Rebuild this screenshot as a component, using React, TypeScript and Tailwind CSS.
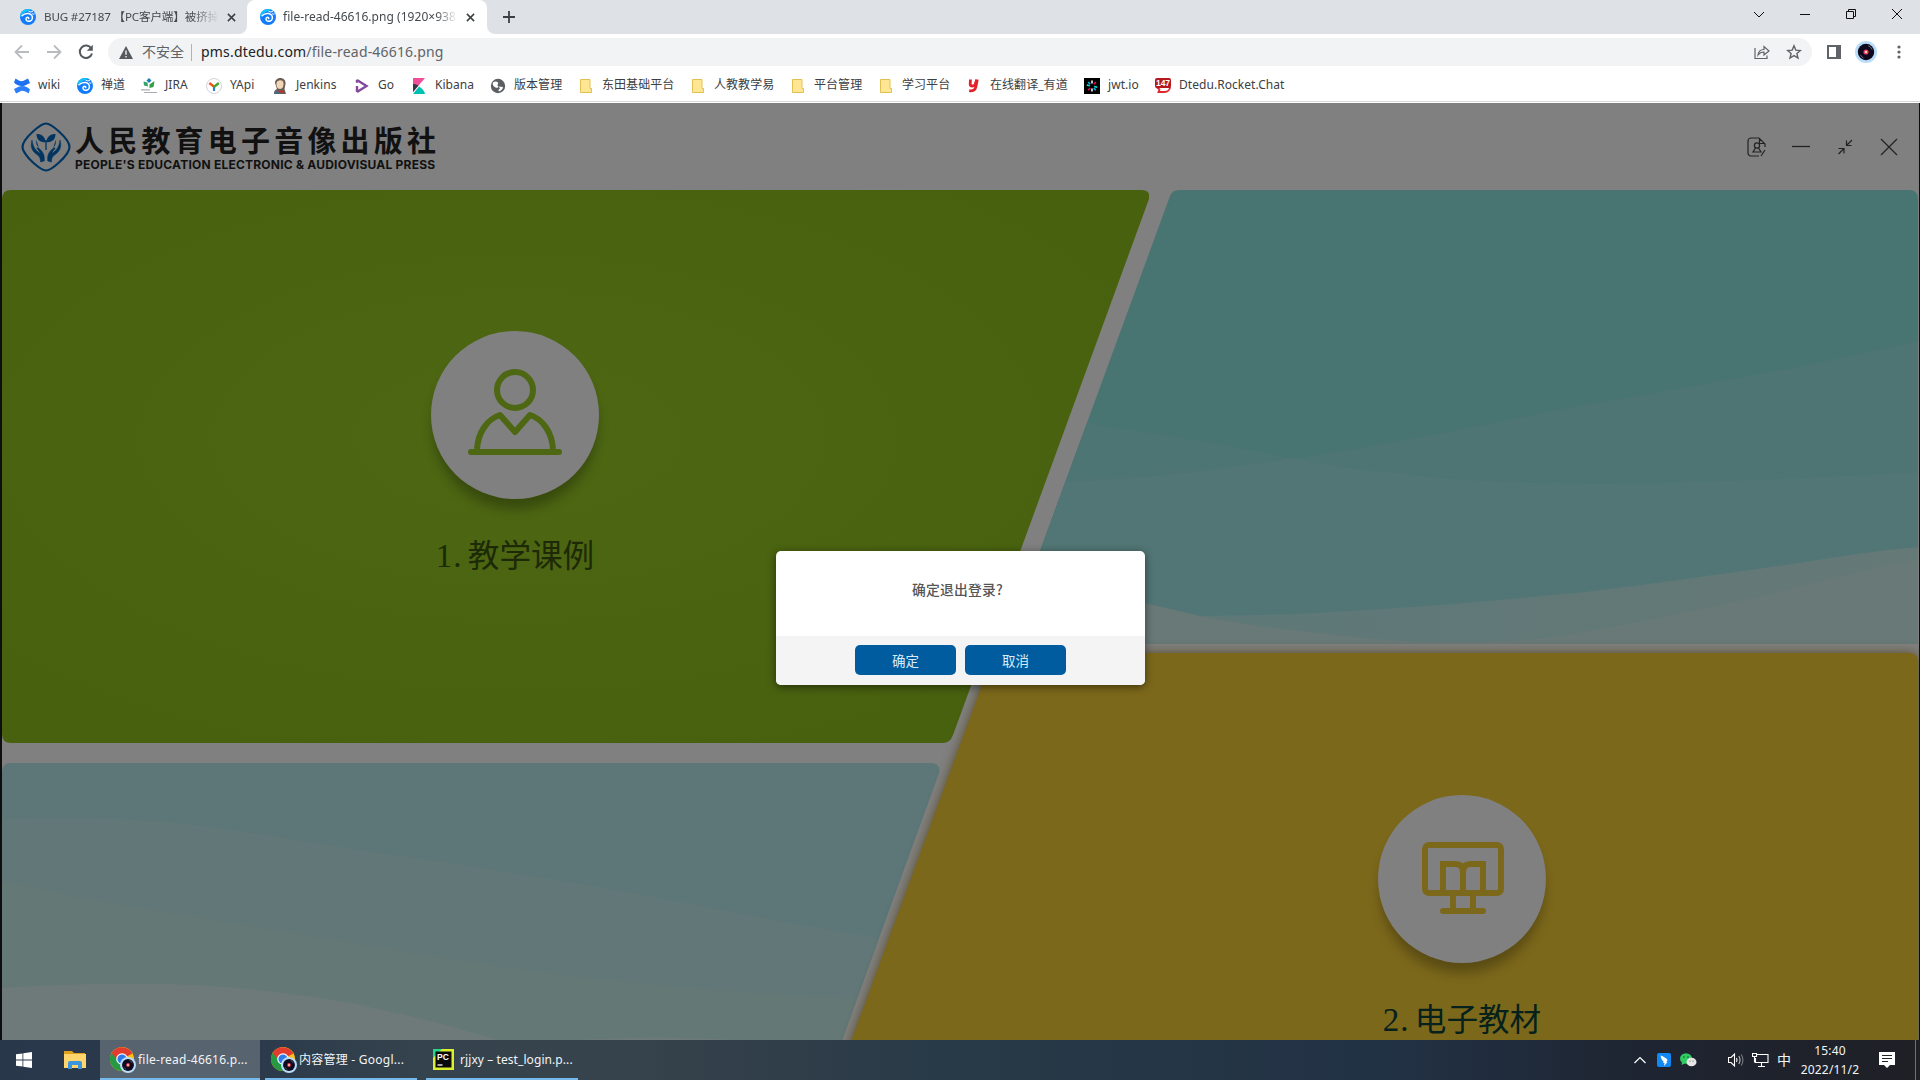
import React from "react";

const UI = "font-['Noto_Sans','Noto_Sans_CJK_SC',sans-serif]";

function SwirlIcon({ className = "h-4 w-4" }: { className?: string }) {
  return (
    <svg viewBox="0 0 16 16" className={`shrink-0 ${className}`}>
      <circle cx="8" cy="8" r="8" fill="#127dfa" />
      <path d="M0 8A8 8 0 0 1 12 1.100C8 2 4 3 0 8z" fill="#14c3f5" />
      <path d="M2 6.800C4 4.800 6.200 4.200 8.500 4.600c3 .600 4.300 2.600 3.800 5-.500 2.300-3.200 3.400-5.200 2.300-1.700-1-1.500-3.400.400-3.600.900 0 1.400.6 1.200 1.300" fill="none" stroke="#fff" strokeWidth="1.500" strokeLinecap="round" />
      <path d="M9 2.500q2 1 3.500.2M12.500 5q1 .5 1.700 0" fill="none" stroke="#fff" strokeWidth="1" strokeLinecap="round" />
    </svg>
  );
}

function CloseGlyph({ className }: { className: string }) {
  return (
    <svg viewBox="0 0 10 10" className={`shrink-0 ${className}`} fill="none" stroke="currentColor" strokeWidth="1.7">
      <path d="M1 1l8 8M9 1L1 9" />
    </svg>
  );
}

function WinBtn({ children }: { children: React.ReactNode }) {
  return (
    <div className="flex h-[28px] w-[46px] items-center justify-center">
      <svg viewBox="0 0 12 12" className="h-3 w-3" fill="none" stroke="#111" strokeWidth="1">
        {children}
      </svg>
    </div>
  );
}

function TabStrip() {
  return (
    <div className="flex h-[34px] bg-[#dee1e6] text-xs text-[#45494d]">
      <div className="flex h-[34px] w-[247px] items-center pl-5">
        <SwirlIcon />
        <span className="ml-2 w-[176px] overflow-hidden text-[11.6px] tracking-[-0.150px] whitespace-nowrap [mask-image:linear-gradient(to_right,#000_84%,transparent_99%)]">BUG #27187 【PC客户端】被挤掉</span>
        <CloseGlyph className="ml-[7px] h-[9px] w-[9px] text-[#3c4043]" />
      </div>
      <div className="relative flex h-[34px] w-[240px] items-center rounded-t-lg bg-white pl-[13px]">
        <svg viewBox="0 0 8 8" className="absolute bottom-0 -left-2 h-2 w-2"><path d="M8 0v8H0a8 8 0 0 0 8-8z" fill="#fff" /></svg>
        <svg viewBox="0 0 8 8" className="absolute -right-2 bottom-0 h-2 w-2"><path d="M0 0v8h8a8 8 0 0 1-8-8z" fill="#fff" /></svg>
        <SwirlIcon />
        <span className="ml-[7px] w-[176px] overflow-hidden text-[12px] tracking-[0.040px] whitespace-nowrap [mask-image:linear-gradient(to_right,#000_87%,transparent_99%)]">file-read-46616.png (1920×938)</span>
        <CloseGlyph className="ml-[7px] h-[9px] w-[9px] text-[#3c4043]" />
      </div>
      <svg viewBox="0 0 12 12" className="mt-[11px] ml-4 h-3 w-3" stroke="#3c4043" strokeWidth="1.8"><path d="M6 0v12M0 6h12" /></svg>
      <div className="ml-auto flex">
        <WinBtn><path d="M1 4l5 5 5-5" /></WinBtn>
        <WinBtn><path d="M1 6.500h10" /></WinBtn>
        <WinBtn><path d="M1.500 3.500h7v7h-7zM3.500 3.500v-2h7v7h-2" /></WinBtn>
        <WinBtn><path d="M1 1l10 10M11 1L1 11" /></WinBtn>
      </div>
    </div>
  );
}

function Avatar({ className }: { className: string }) {
  return (
    <svg viewBox="0 0 22 22" className={`shrink-0 ${className}`}>
      <circle cx="11" cy="11" r="11" fill="#b9dcf8" />
      <circle cx="11" cy="11" r="8.200" fill="#0c0a1c" />
      <path d="M13 4.500a7 7 0 0 1 4 4M5.500 14a7 7 0 0 0 3 3" stroke="#6d6d80" strokeWidth="1" fill="none" />
      <circle cx="11" cy="11" r="2.600" fill="#e8336b" />
      <circle cx="11" cy="11" r="1.300" fill="#ffd98a" />
    </svg>
  );
}

function Toolbar() {
  return (
    <div className="flex h-[36px] items-center">
      <svg viewBox="0 0 16 16" className="ml-[14px] h-4 w-4" fill="none" stroke="#b9bbbe" strokeWidth="1.800"><path d="M15 8H2M8 1.500L1.500 8 8 14.500" /></svg>
      <svg viewBox="0 0 16 16" className="ml-4 h-4 w-4" fill="none" stroke="#b9bbbe" strokeWidth="1.800"><path d="M1 8h13M8 1.500L14.500 8 8 14.500" /></svg>
      <svg viewBox="0 0 16 16" className="ml-4 h-4 w-4" fill="none" stroke="#55595d" strokeWidth="2"><path d="M13.300 4.500A6.200 6.200 0 1 0 14 9.500" /><path d="M14.800 0.800v6H8.800z" fill="#55595d" stroke="none" /></svg>
      <div className="ml-[14px] flex h-7 w-[1704px] items-center rounded-full bg-[#f1f3f4] pl-[11px]">
        <svg viewBox="0 0 14 13" className="h-[13px] w-[14px]"><path d="M7 0l7 13H0z" fill="#55595d" /><path d="M7 4.500v4.200M7 10v1.500" stroke="#f1f3f4" strokeWidth="1.400" /></svg>
        <span className="ml-[9px] w-[44px] pb-px text-[14px] whitespace-nowrap text-[#5f6368]">不安全</span>
        <span className="ml-[5px] h-[17px] w-px bg-[#b0b3b6]" />
        <span className="ml-[9px] pb-[2px] text-[14px] tracking-[0.180px] whitespace-nowrap text-[#5f6368]"><span className="text-[#202124]">pms.dtedu.com</span>/file-read-46616.png</span>
        <div className="mr-[10px] ml-auto flex items-center gap-[16px]">
          <svg viewBox="0 0 16 16" className="h-4 w-4" fill="none" stroke="#5f6368" strokeWidth="1.200"><path d="M1 4v10.500h12v-3M4 11c.5-4 3-5.500 6-5.500V2.500l5 4.500-5 4V8C7.500 8 5.500 9 4 11z" /></svg>
          <svg viewBox="0 0 16 16" className="h-4 w-4" fill="none" stroke="#5f6368" strokeWidth="1.400"><path d="M8 1.800l1.800 4.300 4.600.4-3.500 3 1.100 4.500-4-2.400L4 14l1.100-4.500-3.500-3 4.600-.4z" /></svg>
        </div>
      </div>
      <svg viewBox="0 0 14 14" className="ml-[15px] h-[14px] w-[14px]"><path d="M1 1h12v12H1z" fill="#fff" stroke="#5f6368" strokeWidth="2" /><path d="M9 0h5v14H9z" fill="#5f6368" /></svg>
      <Avatar className="ml-[14px] h-[22px] w-[22px]" />
      <svg viewBox="0 0 4 14" className="ml-[20px] h-[14px] w-1" fill="#5f6368"><circle cx="2" cy="2" r="1.600" /><circle cx="2" cy="7" r="1.600" /><circle cx="2" cy="12" r="1.600" /></svg>
    </div>
  );
}

const FolderGlyph = <path d="M2.500 1.500h9.500v9h1.500v4H2.500z" fill="#ffe694" stroke="#e3c150" strokeWidth="1" />;

const bookmarks: { label: string; w: string; icon: React.ReactNode }[] = [
  { label: "wiki", w: "w-[63px]", icon: <><path d="M1.500.5C4 2.500 7 3.500 9 3L14 .500 16 5 11.500 7.200C7 9.200 3 7.500 0 4.500z" fill="#1f6ff2" /><path d="M14.500 15.500C12 13.500 9 12.500 7 13L2 15.500 0 11 4.500 8.800C9 6.800 13 8.500 16 11.500z" fill="#2c7efb" /></> },
  { label: "禅道", w: "w-[64px]", icon: null },
  { label: "JIRA", w: "w-[65px]", icon: <><path d="M8 0l2.500 2.500L8 5 5.500 2.500z" fill="#1b7fb5" /><path d="M2.500 3.500l4 1 .500 4-4-1z" fill="#38a169" /><path d="M8.500 6.500L13.500 3 12.500 9l-4 1z" fill="#2f9e44" /><path d="M0 11.800h9M3 14.500h13" stroke="#a9acb0" strokeWidth="1.200" /></> },
  { label: "YApi", w: "w-[66px]", icon: <><circle cx="8" cy="8" r="7.500" fill="#fff" stroke="#cfd3d6" /><path d="M8 8.500V13" stroke="#2b7de9" strokeWidth="2.200" /><path d="M8.500 9L3.300 5" stroke="#f4511e" strokeWidth="2.400" /><path d="M8 9l4.800-4" stroke="#43a829" strokeWidth="2.400" /></> },
  { label: "Jenkins", w: "w-[82px]", icon: <><path d="M3 5C3 1.500 6 0 8.500 0S14 2 13.500 6l-1 5L14 16H2c0-3 1-4 3-5z" fill="#6b5b53" /><path d="M4.500 5C5 2 11 1 11.500 5c.300 3-1 6-3.500 6S4 8 4.500 5z" fill="#f0d6b7" /><path d="M3 13l4-1.500L9 16H2z" fill="#4b6a7c" /><path d="M6.500 12l5 1v1.800l-5-.5z" fill="#c6302b" /></> },
  { label: "Go", w: "w-[57px]", icon: <path d="M3 1.800v3M3 14V8M3 2l9.500 6L3 14" fill="none" stroke="#85499c" strokeWidth="2.400" /> },
  { label: "Kibana", w: "w-[79px]", icon: <><path d="M2 0h12L2 14z" fill="#f04e98" /><path d="M2 6c2 0 4 .600 5.500 1.500L2 14z" fill="#343741" /><path d="M8 8.500C11 10 13.500 13 14 16H2z" fill="#00bfb3" /></> },
  { label: "版本管理", w: "w-[88px]", icon: <><circle cx="8" cy="8" r="7.200" fill="#5b5f63" /><path d="M3 4.500c2-1.500 4-1 5 0S6.500 7 8 8s-1 2.500-2.500 1.500S2 7 3 4.500zM9 8.500l4 .500c0 2-2 4-4 4.500-1-1-.5-2 .5-2.500S9 9.500 9 8.500z" fill="#fff" /></> },
  { label: "东田基础平台", w: "w-[112px]", icon: FolderGlyph },
  { label: "人教教学易", w: "w-[100px]", icon: FolderGlyph },
  { label: "平台管理", w: "w-[88px]", icon: FolderGlyph },
  { label: "学习平台", w: "w-[88px]", icon: FolderGlyph },
  { label: "在线翻译_有道", w: "w-[118px]", icon: <path d="M4.500 1.500L4.200 6c0 2.600 4 2.600 5 .3l1.600-4.800M11.300 1.500L9.800 9c-.6 3.400-3.200 4.300-6.600 3.700" fill="none" stroke="#e3212b" strokeWidth="2.800" /> },
  { label: "jwt.io", w: "w-[71px]", icon: <><path d="M0 0h16v16H0z" fill="#000" /><path d="M8 2.500v3M8 10.500v3" stroke="#fff" strokeWidth="1.500" /><path d="M2.800 7l3 .700M10.200 8.500l3 .700" stroke="#00f2e6" strokeWidth="1.500" /><path d="M4.200 4l2 2.200M9.800 10l2 2.200" stroke="#00b9f1" strokeWidth="1.500" /><path d="M11.800 4l-2 2.200M6.200 10l-2 2.200" stroke="#fb015b" strokeWidth="1.500" /></> },
  { label: "Dtedu.Rocket.Chat", w: "w-[140px]", icon: <><path d="M1.500 8.500c1 2 3 2.500 3 3L3.500 14h6c3 0 5.500-2 5.500-5" fill="#fff" stroke="#e3262c" strokeWidth="1.800" /><rect x="0" y="0" width="16" height="10" rx="2" fill="#b5191f" /><text x="8" y="8.200" textAnchor="middle" fontSize="8.500" fontWeight="700" fill="#fff" fontFamily="Liberation Sans">147</text></> },
];

function BookmarkBar() {
  return (
    <div className="flex h-8 items-center border-b border-[#d5d7da] pl-[14px] text-[#3c4043]">
      {bookmarks.map((b) => (
        <div key={b.label} className={`flex h-full shrink-0 items-center gap-2 ${b.w}`}>
          {b.icon ? <svg viewBox="0 0 16 16" className="h-4 w-4 shrink-0">{b.icon}</svg> : <SwirlIcon />}
          <span className="pb-px text-[12px] leading-[18px] tracking-[0.050px] whitespace-nowrap">{b.label}</span>
        </div>
      ))}
    </div>
  );
}

function AppHeader() {
  return (
    <header className="flex h-[87px] items-center pl-[19px]">
      <svg viewBox="0 0 50 50" className="h-[50px] w-[50px]">
        <path d="M25 1.500C28 1.500 33 5 38 9.500 44 15 48.500 21 48.500 25S44 35 38 40.500 28 48.500 25 48.500 17 45 12 40.500 1.500 29 1.500 25 6 15 12 9.500 22 1.500 25 1.500z" fill="none" stroke="#003562" strokeWidth="2.200" />
        <path d="M25 20c-1.500-5.500-4-8-9.500-8 0 5.500 3.500 9 9.500 8zm0 0c1.500-5.500 4-8 9.500-8 0 5.500-3.500 9-9.500 8z" fill="#003562" />
        <path d="M25 18v10" stroke="#003562" strokeWidth="1.300" />
        <path id="hand" d="M11 18c-1.500 5-1 10 3.500 13.500C18 34 19.500 35 19.500 40l3.800-1c.5-6-.8-9-6.300-13.500l-1.200.9c1.700 1.800 2.800 3.300 3.200 5C14.500 28.500 12 25 11 18zM15.500 18.500c-.5 3 .5 5 2 6.500" fill="#003562" stroke="#003562" strokeWidth=".5" />
        <path d="M39 18c1.500 5 1 10-3.500 13.500C32 34 30.500 35 30.500 40l-3.800-1c-.5-6 .8-9 6.300-13.500l1.200.9c-1.700 1.800-2.800 3.300-3.200 5C35.500 28.500 38 25 39 18zM34.500 18.500c.5 3-.5 5-2 6.500" fill="#003562" stroke="#003562" strokeWidth=".5" />
      </svg>
      <div className="ml-[4px] flex flex-col font-bold text-[#111]">
        <span className="font-['Noto_Sans_CJK_SC',sans-serif] text-[29px] leading-[32px] tracking-[4.200px] whitespace-nowrap">人民教育电子音像出版社</span>
        <span className="mt-[4px] font-[Inter,sans-serif] text-[12px] leading-[12px] tracking-[0.220px] whitespace-nowrap">PEOPLE'S EDUCATION ELECTRONIC &amp; AUDIOVISUAL PRESS</span>
      </div>
      <div className="mr-[20px] ml-auto flex items-center gap-[24px] text-[#222]">
        <svg viewBox="0 0 20 20" className="h-5 w-5" fill="none" stroke="currentColor" strokeWidth="1.200"><path d="M12 19H4a3 3 0 0 1-3-3V4a3 3 0 0 1 3-3h8l6 6v3M12.500 1v5.500H18M18 13l-4 6" /><circle cx="10" cy="8.500" r="2.600" /><path d="M8.500 11L6 15h8l-2.500-4" /></svg>
        <svg viewBox="0 0 20 20" className="h-5 w-5" stroke="currentColor" strokeWidth="1.300"><path d="M1 9.500h18" /></svg>
        <svg viewBox="0 0 20 20" className="h-5 w-5" fill="none" stroke="currentColor" strokeWidth="1.200"><path d="M17 3l-5.500 5.500M11.500 3.500v5h5M3.500 17L9 11.500M3.500 11.500H9v5" /></svg>
        <svg viewBox="0 0 20 20" className="h-5 w-5" stroke="currentColor" strokeWidth="1.200"><path d="M2 2l16 16M18 2L2 18" /></svg>
      </div>
    </header>
  );
}

function Badge({ children }: { children: React.ReactNode }) {
  return (
    <div className="flex h-[168px] w-[168px] items-center justify-center rounded-full bg-[#808080] shadow-[0_12px_12px_-2px_rgba(0,0,0,0.28)]">
      <svg viewBox="0 0 168 168" className="h-[168px] w-[168px]">{children}</svg>
    </div>
  );
}

function CardTitle({ num, label, className }: { num: string; label: string; className: string }) {
  return (
    <div className={`flex items-baseline whitespace-nowrap ${className}`}>
      <span className="w-[32px] font-['Liberation_Serif',serif] text-[33px] leading-[40px] tracking-[1px]">{num}</span>
      <span className="font-['Noto_Sans_CJK_SC',sans-serif] text-[31.600px] leading-[40px] font-normal">{label}</span>
    </div>
  );
}

function CoursePanel() {
  return (
    <section className="relative h-[553px] w-[1147px]">
      <svg viewBox="0 0 1147 553" className="absolute inset-0 h-full w-full">
        <defs><radialGradient id="lime" cx="45%" cy="45%" r="60%"><stop offset="0" stopColor="#4d6713" /><stop offset="1" stopColor="#48610f" /></radialGradient></defs>
        <path d="M9 0H1139Q1149 0 1147 9L951 545Q948 553 941 553H9Q0 553 0 544V9Q0 0 9 0z" fill="url(#lime)" />
      </svg>
      <div className="relative ml-[429px] flex w-[168px] flex-col items-center pt-[141px]">
        <Badge>
          <g fill="none" stroke="#4d6713" strokeWidth="6">
            <circle cx="84" cy="59" r="18" />
            <path d="M46 118C47 102 56 88 69 84L84 101 99 84C112 88 121 102 122 118" strokeLinejoin="round" />
            <path d="M40 121h88" strokeLinecap="round" />
          </g>
        </Badge>
        <CardTitle num="1." label="教学课例" className="mt-[34px] text-[#1d2907]" />
      </div>
    </section>
  );
}

function LeftWaves() {
  return (
    <section className="relative mt-5 h-[277px] w-[939px] overflow-hidden">
      <svg viewBox="2 763 939 277" className="absolute inset-0 h-full w-full">
        <defs><clipPath id="lowLeft"><path d="M11 763H931Q941 763 939 773L842 1040H2V772Q2 763 11 763z" /></clipPath></defs>
        <g clipPath="url(#lowLeft)">
          <path d="M0 763h945v277H0z" fill="#5d7677" />
          <path d="M0 819C50 817 110 817 153 821 200 824 230 830 268 835 330 846 390 854 446 862L587 885C660 897 720 910 791 923L890 940V1040H0z" fill="#627777" />
          <path d="M0 880C50 892 100 902 153 910L281 931 383 948C440 958 490 966 548 973 590 979 640 983 676 987 740 992 800 997 870 999V1040H0z" fill="#647875" />
          <path d="M0 988C60 984 120 983 166 984 200 985 235 987 268 991 310 996 350 1002 383 1010 430 1020 465 1030 497 1040H0zM574 1040Q655 1035 740 1040z" fill="#6d7a79" />
        </g>
      </svg>
    </section>
  );
}

function RightWaves() {
  return (
    <section className="relative h-[454px] w-[912px] self-end">
      <svg viewBox="1006 190 912 454" className="absolute inset-0 h-full w-full">
        <defs>
          <clipPath id="upRight"><path d="M1179 190H1909Q1918 190 1918 199V644H1006L1170 196Q1172 190 1179 190z" /></clipPath>
          <linearGradient id="mist" x1="0" x2="1"><stop offset="0" stopColor="#5c7878" /><stop offset="1" stopColor="#657977" /></linearGradient>
        </defs>
        <g clipPath="url(#upRight)">
          <path d="M1000 190h920v454h-920z" fill="#487472" />
          <path d="M1064 420Q1086 421 1100 426C1160 433 1230 446 1293 458 1330 466 1365 471 1400 473 1450 480 1510 483 1557 483 1610 484 1650 483 1693 482 1770 480 1850 475 1920 473V644H1000V420z" fill="#4c7574" />
          <path d="M1000 485C1060 483 1120 480 1186 473 1225 469 1265 463 1300 458 1350 450 1400 441 1443 433L1557 410C1640 396 1710 383 1793 368L1920 341V473C1850 475 1770 480 1693 482 1650 483 1610 484 1557 483 1510 483 1450 480 1400 473 1365 471 1330 466 1293 458z" fill="#4e7574" />
          <path d="M1000 485C1060 483 1120 480 1186 473 1225 469 1265 463 1293 458 1330 466 1365 471 1400 473 1450 480 1510 483 1557 483 1610 484 1650 483 1693 482 1770 480 1850 475 1920 473V644H1000z" fill="#527675" />
          <path d="M1000 616H1186C1230 616 1265 615 1300 614 1350 611 1400 608 1443 605 1495 601 1540 596 1586 592 1660 583 1730 573 1800 563 1840 556 1880 550 1920 547V644H1000z" fill="url(#mist)" />
          <path d="M1100 590Q1125 597 1145 603L1200 616C1240 624 1290 630 1336 635 1370 639 1405 642 1443 642 1480 642 1510 641 1536 639 1600 631 1665 616 1729 603 1790 590 1855 570 1920 559V644H1000V590z" fill="#687977" />
        </g>
      </svg>
    </section>
  );
}

function TextbookPanel() {
  return (
    <section className="relative mt-[9px] h-[387px] w-[1066px]">
      <svg viewBox="852 653 1066 387" className="absolute inset-0 h-full w-full overflow-visible">
        <defs><filter id="glow" x="-5%" y="-10%" width="110%" height="120%"><feGaussianBlur stdDeviation="6" /></filter></defs>
        <path d="M1002 653H1909Q1918 653 1918 662V1050H848L991 661Q994 653 1002 653z" fill="#4b390c" opacity="0.700" filter="url(#glow)" />
        <path d="M1002 653H1909Q1918 653 1918 662V1050H848L991 661Q994 653 1002 653z" fill="#7c681b" />
      </svg>
      <div className="relative ml-[526px] flex w-[168px] flex-col items-center pt-[142px]">
        <Badge>
          <g fill="none" stroke="#7c681b" strokeWidth="6">
            <rect x="47" y="50" width="76" height="48" rx="4" />
            <path d="M65 97V69h12q8 0 8 8 0-8 8-8h12v28M85 72v26M75 99v17M95 99v17" />
            <path d="M65 116h40" strokeLinecap="round" />
          </g>
        </Badge>
        <CardTitle num="2." label="电子教材" className="mt-[34px] text-[#06211c]" />
      </div>
    </section>
  );
}

function Dialog() {
  return (
    <div className="absolute top-[448px] left-[774px] flex h-[134px] w-[369px] flex-col overflow-hidden rounded-[5px] bg-white font-['Noto_Sans_CJK_SC',sans-serif] shadow-[0_2px_8px_rgba(0,0,0,0.500)]">
      <p className="flex flex-1 items-start justify-center pt-[28px] pr-[6px] text-[13.800px] leading-[20px] tracking-[0.200px] font-medium text-[#555]">确定退出登录?</p>
      <div className="flex h-[49px] justify-center gap-[9px] bg-[#f4f4f4] pt-[9px]">
        <button className="h-[30px] w-[101px] rounded-[5px] bg-[#005c9f] pb-px text-[13.500px] leading-[20px] text-[#d9ebf8]">确定</button>
        <button className="h-[30px] w-[101px] rounded-[5px] bg-[#005c9f] pb-px text-[13.500px] leading-[20px] text-[#d9ebf8]">取消</button>
      </div>
    </div>
  );
}

function ChromeIcon() {
  return (
    <div className="relative h-6 w-6 shrink-0">
      <svg viewBox="0 0 24 24" className="h-6 w-6">
        <circle cx="12" cy="12" r="12" fill="#fbc116" />
        <path d="M12 12L1.600 6A12 12 0 0 0 12 24l5.200-9z" fill="#269a43" />
        <path d="M12 12H6.800L1.600 6A12 12 0 0 1 22.400 6.500z" fill="#e33b2e" />
        <circle cx="12" cy="12" r="5.800" fill="#fff" /><circle cx="12" cy="12" r="4.600" fill="#2f7bea" />
      </svg>
      <Avatar className="absolute top-[10px] left-[10px] h-[16px] w-[16px]" />
    </div>
  );
}

function Taskbar() {
  return (
    <footer className="flex h-10 items-stretch bg-[linear-gradient(to_right,#28374a_0%,#2b3a4b_13%,#35434e_22%,#37434c_32%,#283947_50%,#223245_72%,#1e2431_86%,#1f2026_100%)] text-[#f2f4f6]">
      <div className="flex w-[50px] items-center pl-4">
        <svg viewBox="0 0 16 16" className="h-4 w-4" fill="#fff"><path d="M0 2.300l6.500-.9v6.200H0zM7.300 1.300L16 0v7.600H7.300zM0 8.400h6.500v6.200L0 13.700zM7.300 8.400H16V16l-8.700-1.300z" /></svg>
      </div>
      <div className="flex w-[50px] items-center pl-[14px]">
        <svg viewBox="0 0 22 18" className="h-[18px] w-[22px]"><path d="M0 0h8l2 2h11v3H0z" fill="#e0a21c" /><path d="M0 3h22v14H0z" fill="#ffd56c" /><path d="M4 18v-6q0-2 2-2h10q2 0 2 2v6h-4v-4H8v4z" fill="#3a97dd" /></svg>
      </div>
      <div className="flex w-[160px] items-center border-b-2 border-[#76b9ed] bg-[#57636f] pl-[10px]">
        <ChromeIcon /><span className="ml-1 pt-[2px] text-[12px] leading-[18px] tracking-[0.240px] whitespace-nowrap">file-read-46616.p...</span>
      </div>
      <div className="ml-[5px] flex w-[152px] items-center border-b-2 border-[#76b9ed] pl-[6px]">
        <ChromeIcon /><span className="ml-1 pt-[2px] text-[12px] leading-[18px] tracking-[0.240px] whitespace-nowrap">内容管理 - Googl...</span>
      </div>
      <div className="ml-[9px] flex w-[152px] items-center border-b-2 border-[#76b9ed] pl-[7px]">
        <svg viewBox="0 0 21 21" className="h-[21px] w-[21px]"><path d="M0 0h21v21H0z" fill="#dcee2c" /><path d="M0 0h9L0 9z" fill="#21d789" /><path d="M2.500 2.500h16v16h-16z" fill="#0a0a0a" /><text x="4" y="10.500" fontSize="8.500" fontWeight="700" fill="#fff" fontFamily="Liberation Sans">PC</text><path d="M4.500 16h5" stroke="#fff" strokeWidth="1.300" /></svg>
        <span className="ml-[6px] pt-[2px] text-[12px] leading-[18px] tracking-[0.080px] whitespace-nowrap">rjjxy – test_login.p...</span>
      </div>
      <div className="ml-auto flex items-center">
        <svg viewBox="0 0 12 8" className="h-2 w-3" fill="none" stroke="#fff" strokeWidth="1.200"><path d="M.5 7L6 1.500 11.500 7" /></svg>
        <svg viewBox="0 0 14 14" className="ml-[11px] h-[14px] w-[14px]"><rect width="14" height="14" rx="2" fill="#1288f5" /><path d="M3.500 2.500c3 1 6 2.500 7 4.500L9.500 9h1L7 13l.5-3H6l.8-1.200C5 8 4 5 3.500 2.500z" fill="#fff" /></svg>
        <svg viewBox="0 0 17 14" className="ml-[9px] h-[14px] w-[17px]"><ellipse cx="6" cy="5.500" rx="6" ry="5.300" fill="#2ecc62" /><path d="M2 9l-.5 3L5 10.500z" fill="#2ecc62" /><ellipse cx="11.500" cy="9" rx="5" ry="4.300" fill="#e6e6e6" /><circle cx="4" cy="4" r=".8" fill="#14532d" /><circle cx="8" cy="4" r=".8" fill="#14532d" /><circle cx="10" cy="8" r=".6" fill="#555" /><circle cx="13" cy="8" r=".6" fill="#555" /></svg>
        <svg viewBox="0 0 17 16" className="ml-[31px] h-4 w-[17px]" fill="none" stroke="#fff" strokeWidth="1.100"><path d="M.5 5.500h2.500L6.500 2v12L3 10.500H.5z" /><path d="M8.500 6q1 2 0 4" /><path d="M10.800 4q2.500 4 0 8" opacity=".7" /><path d="M13.200 2.500q3.500 5.500 0 11" opacity=".4" /></svg>
        <svg viewBox="0 0 17 16" className="ml-[7px] h-4 w-[17px]" fill="none" stroke="#fff" strokeWidth="1.100"><path d="M5 2.500h11v8H3.500V6M9.500 10.500v4M6 14.500h7M.5 1.500h4v3h-4zM2.500 4.500v6" /></svg>
        <span className="ml-[8px] w-[15px] text-[14px] leading-[18px]">中</span>
        <div className="ml-[7px] flex w-[62px] flex-col items-center text-[12px] leading-[19px] tracking-[0.150px]"><span>15:40</span><span>2022/11/2</span></div>
        <svg viewBox="0 0 16 16" className="ml-[18px] h-4 w-4"><path d="M0 0h16v13h-5l-3 3-3-3H0z" fill="#fff" /><path d="M3 3.500h10M3 6.500h10M3 9.500h6" stroke="#20242c" strokeWidth="1.200" /></svg>
        <span className="ml-[20px] h-10 w-px bg-[#6d7278]" /><span className="w-1" />
      </div>
    </footer>
  );
}

export default function App() {
  return (
    <div className={`flex h-[1080px] w-[1920px] flex-col overflow-hidden bg-white ${UI}`}>
      <TabStrip />
      <Toolbar />
      <BookmarkBar />
      <main className="relative mt-px h-[937px] overflow-hidden border-r border-l-2 border-[#0e0e0e] bg-[#808080]">
        <AppHeader />
        <div className="flex">
          <div className="flex w-[1147px] shrink-0 flex-col"><CoursePanel /><LeftWaves /></div>
          <div className="-ml-[297px] flex w-[1066px] shrink-0 flex-col"><RightWaves /><TextbookPanel /></div>
        </div>
        <Dialog />
      </main>
      <Taskbar />
    </div>
  );
}
